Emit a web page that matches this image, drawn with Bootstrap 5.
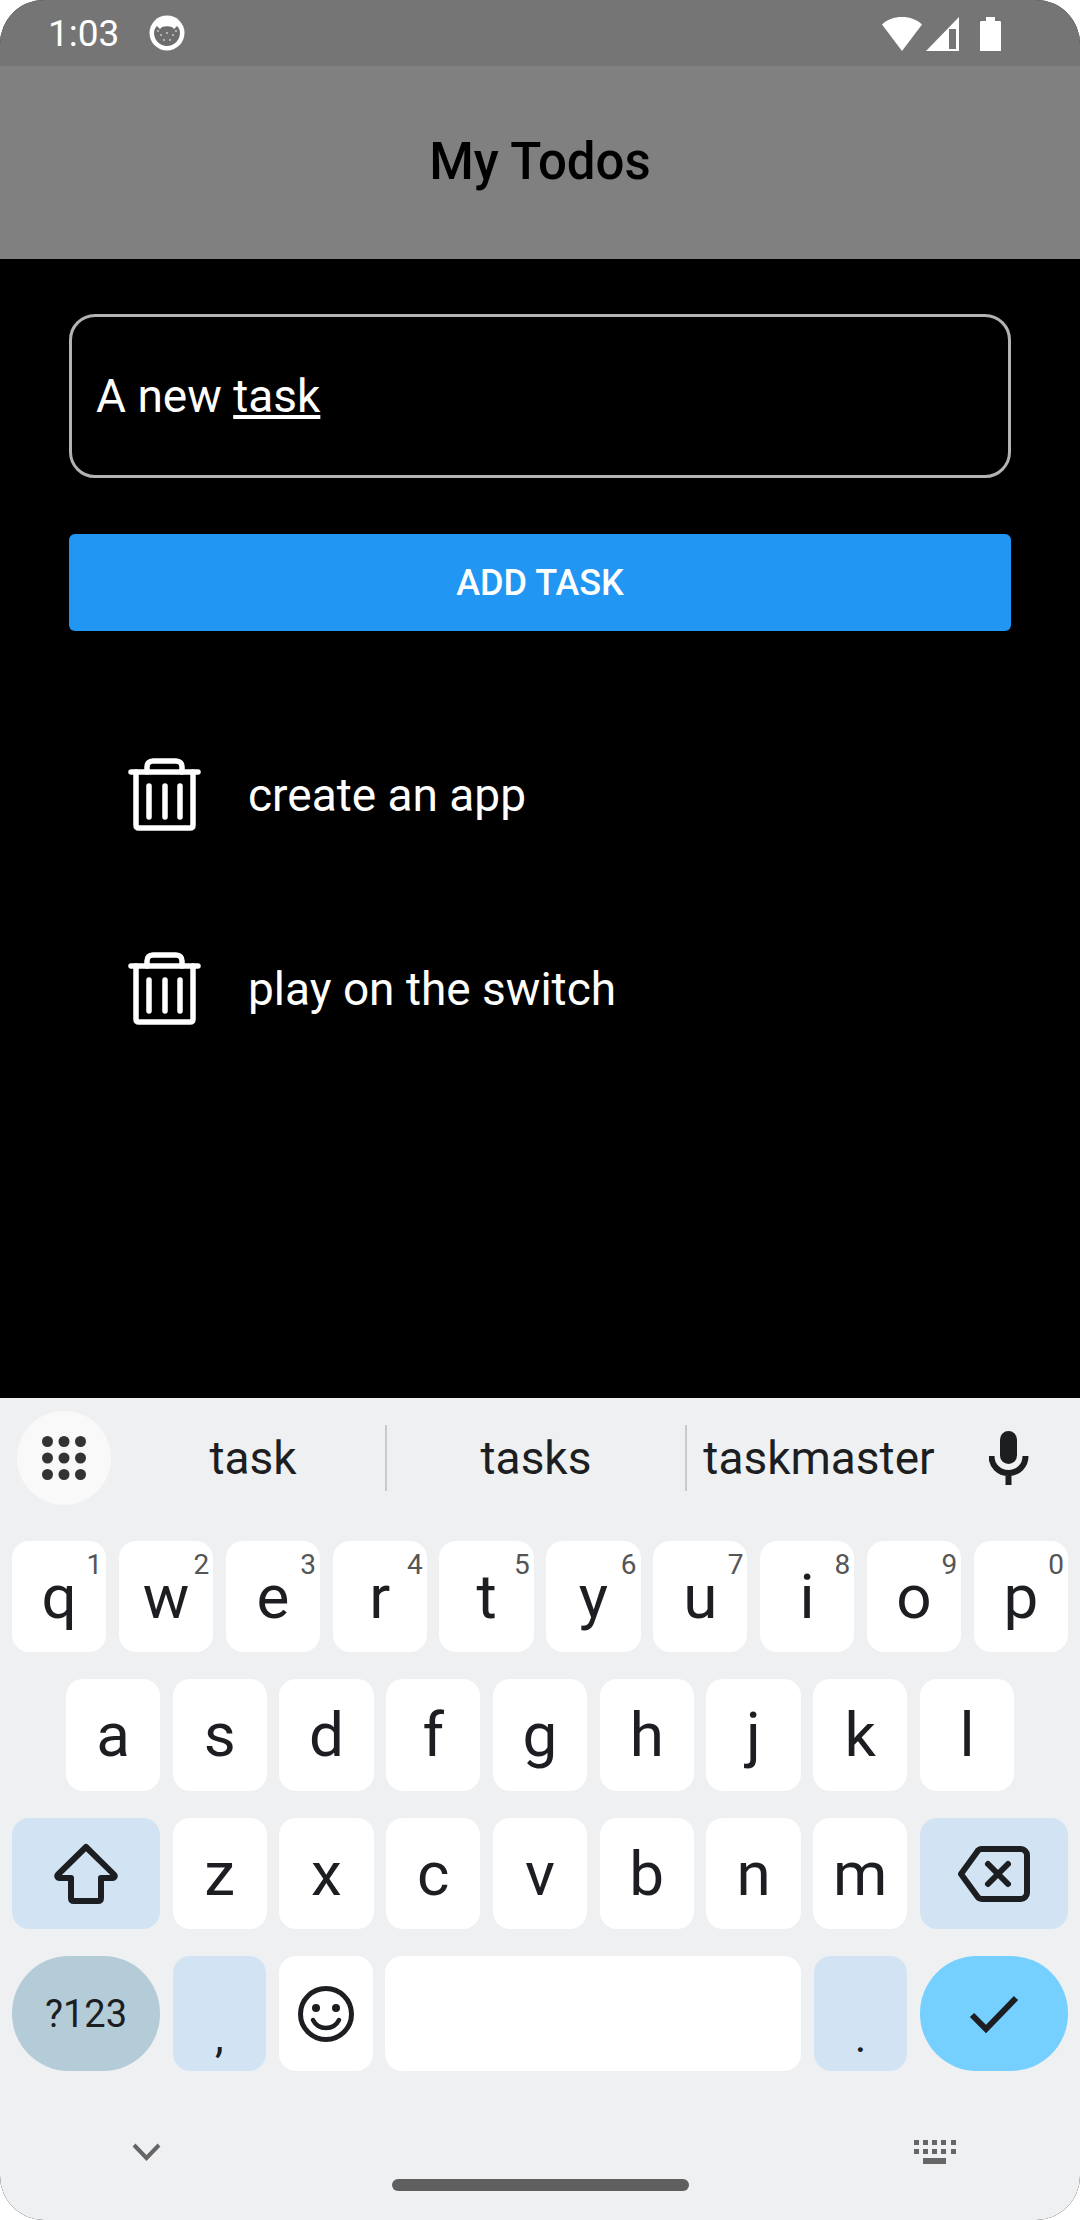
<!DOCTYPE html>
<html lang="en">
<head>
  <meta charset="UTF-8" />
  <title>My Todos</title>
  <link href="https://cdn.jsdelivr.net/npm/bootstrap@5.3.3/dist/css/bootstrap.min.css" rel="stylesheet">
  <style>
    body { margin:0; background:#fff; font-family:Roboto, "Liberation Sans", sans-serif }
    .phone { width:1080px; height:2220px; border-radius:44px; overflow:hidden; background:#000 }

    .status-bar { height:66px; background:#757575; color:#fff; padding:0 77px 0 48px }
    .status-time { font-size:37px; line-height:1; margin-right:30px }
    .app-head { height:193px; background:#808080; color:#000; font-size:51px; font-weight:500 }

    .todo-main { padding:55px 69px 0; color:#fff }
    .task-field.form-control { height:164px; background:#000; color:#fff; border:3px solid #b3b3b3; border-radius:26px; padding:0 0 0 24px; font-size:46px; line-height:1 }
    .add-btn.btn { height:97px; margin-top:56px; margin-bottom:67px; padding:0; background:#2196f3; border:0; border-radius:6px; color:#fff; font-size:36px; font-weight:500 }
    .todo-row { height:194px; padding-left:59px; gap:47px; margin-top:0; font-size:46px; padding-bottom:0 }
    .todo-row svg { margin-top:-1px }

    .kb { height:822px; background:#eff0f2; color:#1c1e21 }
    .suggest { height:143px; padding:13px 0 0 17px }
    .tools-btn { width:94px; height:94px; background:#f9f9fa; border-radius:50% }
    .sug-word { height:66px; margin-top:14px; font-size:46px; color:#1c1e21 }
    .sug-1 { width:266px; margin-left:10px; border-right:2px solid #c9cacc }
    .sug-2 { width:300px; border-right:2px solid #c9cacc }
    .sug-3 { width:264px }
    .mic-btn { width:116px; height:94px }

    .key-row { gap:12.6px; padding:0 12px }
    .key-row + .key-row { margin-top:27px }
    .row-home { padding:0 66px }
    .kh-111 { height:111px }
    .kh-112 { height:112px }
    .kh-115 { height:115px }
    .kb-key { position:relative; flex:1 1 0; background:#fff; border-radius:17px; font-size:62px; line-height:1; color:#1c1e21 }
    .kb-key sup { position:absolute; top:10px; right:4px; font-size:28px; line-height:1; color:#555; vertical-align:baseline }
    .key-wide { flex:0 0 148px }
    .key-space { flex:0 0 416px }
    .key-fn { background:#d2e4f4 }
    .key-sym { background:#b4cbd8; border-radius:57px; font-size:38px }
    .key-go { background:#75cfff; border-radius:57px }
    .key-mark { font-size:44px; padding-bottom:12px }

    .kb-nav { padding:69px 124px 0 132px }
    .home-bar { width:297px; height:12px; margin:15px auto 0; background:#5f5f5f; border-radius:6px }
  </style>
</head>
<body>
<div class="phone d-flex flex-column">

  <div class="status-bar d-flex align-items-center flex-shrink-0">
    <span class="status-time">1:03</span>
    <svg width="36" height="36" viewBox="0 0 36 36">
      <circle cx="18" cy="18" r="17.5" fill="#fff"/>
      <path d="M5 18c0-3 1-5 3-7l3 3 2-2c3-1 7-1 10 0l2 2 3-3c2 2 3 4 3 7 0 7-6 13-13 13S5 25 5 18z" fill="#6d6d6d"/>
      <g fill="#c8c8c8"><circle cx="12" cy="20" r="1"/><circle cx="18" cy="18" r="1"/><circle cx="24" cy="20" r="1"/><circle cx="15" cy="25" r="1"/><circle cx="21" cy="25" r="1"/><circle cx="9" cy="16" r="1"/><circle cx="27" cy="16" r="1"/></g>
    </svg>
    <div class="d-flex align-items-center ms-auto">
      <svg width="122" height="36" viewBox="0 0 122 36">
        <path d="M1 9.500C6 4.500 13 2 21 2s15 2.500 20 7.500L21 36z" fill="#fff"/>
        <path d="M45 36 78 2v34z" fill="#fff"/>
        <path d="M68 14h7v20h-7z" fill="#757575"/>
        <path d="M105 2h9v4h4.500c1 0 1.500.5 1.500 1.500V35.500c0 1-.5 1.500-1.500 1.500h-18c-1 0-1.500-.5-1.500-1.500V7.500c0-1 .5-1.500 1.500-1.500h4.500z" fill="#fff"/>
      </svg>
    </div>
  </div>

  <div class="app-head d-flex align-items-center justify-content-center flex-shrink-0">My Todos</div>

  <div class="todo-main flex-grow-1">
    <div class="task-field form-control d-flex align-items-center">
      <span>A new <u>task</u></span>
    </div>
    <button class="add-btn btn w-100 d-block" type="button">ADD TASK</button>

    <div class="todo-row d-flex align-items-center">
      <svg width="73" height="73" viewBox="0 0 73 73" fill="none" stroke="#fff" stroke-width="5.500" stroke-linecap="round" stroke-linejoin="round">
        <path d="M3 14h67"/>
        <path d="M19 14V9c0-3.500 2-6 6-6h23c4 0 6 2.500 6 6v5"/>
        <path d="M8 14v53c0 2 1 3 3 3h51c2 0 3-1 3-3V14"/>
        <path d="M21 28v31M37 28v31M52 28v31"/>
      </svg>
      <span>create an app</span>
    </div>
    <div class="todo-row d-flex align-items-center">
      <svg width="73" height="73" viewBox="0 0 73 73" fill="none" stroke="#fff" stroke-width="5.500" stroke-linecap="round" stroke-linejoin="round">
        <path d="M3 14h67"/>
        <path d="M19 14V9c0-3.500 2-6 6-6h23c4 0 6 2.500 6 6v5"/>
        <path d="M8 14v53c0 2 1 3 3 3h51c2 0 3-1 3-3V14"/>
        <path d="M21 28v31M37 28v31M52 28v31"/>
      </svg>
      <span>play on the switch</span>
    </div>
  </div>

  <div class="kb flex-shrink-0">
    <div class="suggest d-flex align-items-start">
      <div class="tools-btn d-flex align-items-center justify-content-center flex-shrink-0">
        <svg width="44" height="44" viewBox="0 0 44 44" fill="#333">
          <circle cx="5.500" cy="5.500" r="5.500"/><circle cx="22" cy="5.500" r="5.500"/><circle cx="38.500" cy="5.500" r="5.500"/>
          <circle cx="5.500" cy="22" r="5.500"/><circle cx="22" cy="22" r="5.500"/><circle cx="38.500" cy="22" r="5.500"/>
          <circle cx="5.500" cy="38.500" r="5.500"/><circle cx="22" cy="38.500" r="5.500"/><circle cx="38.500" cy="38.500" r="5.500"/>
        </svg>
      </div>
      <div class="sug-word sug-1 d-flex align-items-center justify-content-center">task</div>
      <div class="sug-word sug-2 d-flex align-items-center justify-content-center">tasks</div>
      <div class="sug-word sug-3 d-flex align-items-center justify-content-center">taskmaster</div>
      <div class="mic-btn d-flex align-items-center justify-content-center">
        <svg width="40" height="54" viewBox="0 0 40 54" fill="none">
          <rect x="11" y="0" width="17" height="33" rx="8.500" fill="#1c1e21"/>
          <path d="M2.500 25c0 10 7.500 17 17 17s17-7 17-17M19.500 42v12" stroke="#1c1e21" stroke-width="6"/>
        </svg>
      </div>
    </div>

    <div class="key-row d-flex kh-111">
      <div class="kb-key d-flex align-items-center justify-content-center">q<sup>1</sup></div>
      <div class="kb-key d-flex align-items-center justify-content-center">w<sup>2</sup></div>
      <div class="kb-key d-flex align-items-center justify-content-center">e<sup>3</sup></div>
      <div class="kb-key d-flex align-items-center justify-content-center">r<sup>4</sup></div>
      <div class="kb-key d-flex align-items-center justify-content-center">t<sup>5</sup></div>
      <div class="kb-key d-flex align-items-center justify-content-center">y<sup>6</sup></div>
      <div class="kb-key d-flex align-items-center justify-content-center">u<sup>7</sup></div>
      <div class="kb-key d-flex align-items-center justify-content-center">i<sup>8</sup></div>
      <div class="kb-key d-flex align-items-center justify-content-center">o<sup>9</sup></div>
      <div class="kb-key d-flex align-items-center justify-content-center">p<sup>0</sup></div>
    </div>

    <div class="key-row row-home d-flex kh-112">
      <div class="kb-key d-flex align-items-center justify-content-center">a</div>
      <div class="kb-key d-flex align-items-center justify-content-center">s</div>
      <div class="kb-key d-flex align-items-center justify-content-center">d</div>
      <div class="kb-key d-flex align-items-center justify-content-center">f</div>
      <div class="kb-key d-flex align-items-center justify-content-center">g</div>
      <div class="kb-key d-flex align-items-center justify-content-center">h</div>
      <div class="kb-key d-flex align-items-center justify-content-center">j</div>
      <div class="kb-key d-flex align-items-center justify-content-center">k</div>
      <div class="kb-key d-flex align-items-center justify-content-center">l</div>
    </div>

    <div class="key-row d-flex kh-111">
      <div class="kb-key key-wide key-fn d-flex align-items-center justify-content-center">
        <svg width="66" height="62" viewBox="0 0 66 62" fill="none">
          <path d="M33 4 5 31.500c-1.500 1.500-.5 3.500 1.500 3.500H18v20c0 2 1 3 3 3h24c2 0 3-1 3-3V35h11.500c2 0 3-2 1.500-3.500z" stroke="#1c1e21" stroke-width="6" stroke-linejoin="round"/>
        </svg>
      </div>
      <div class="kb-key d-flex align-items-center justify-content-center">z</div>
      <div class="kb-key d-flex align-items-center justify-content-center">x</div>
      <div class="kb-key d-flex align-items-center justify-content-center">c</div>
      <div class="kb-key d-flex align-items-center justify-content-center">v</div>
      <div class="kb-key d-flex align-items-center justify-content-center">b</div>
      <div class="kb-key d-flex align-items-center justify-content-center">n</div>
      <div class="kb-key d-flex align-items-center justify-content-center">m</div>
      <div class="kb-key key-wide key-fn d-flex align-items-center justify-content-center">
        <svg width="72" height="56" viewBox="0 0 72 56" fill="none" stroke="#1c1e21" stroke-width="6" stroke-linecap="round" stroke-linejoin="round">
          <path d="M3 28 19 6c1-2 3-3 5-3h39c3 0 6 3 6 6v38c0 3-3 6-6 6H24c-2 0-4-1-5-3z"/>
          <path d="M30 18l20 20M50 18 30 38"/>
        </svg>
      </div>
    </div>

    <div class="key-row d-flex kh-115">
      <div class="kb-key key-wide key-sym d-flex align-items-center justify-content-center">?123</div>
      <div class="kb-key key-fn key-mark d-flex align-items-end justify-content-center">,</div>
      <div class="kb-key d-flex align-items-center justify-content-center">
        <svg width="56" height="56" viewBox="0 0 56 56" fill="none">
          <circle cx="28" cy="28" r="25.500" stroke="#1c1e21" stroke-width="5"/>
          <circle cx="18" cy="22" r="4" fill="#1c1e21"/><circle cx="38" cy="22" r="4" fill="#1c1e21"/>
          <path d="M15 34c3 6 8 8 13 8s10-2 13-8" stroke="#1c1e21" stroke-width="4.500" stroke-linecap="round"/>
        </svg>
      </div>
      <div class="kb-key key-space"></div>
      <div class="kb-key key-fn key-mark d-flex align-items-end justify-content-center">.</div>
      <div class="kb-key key-wide key-go d-flex align-items-center justify-content-center">
        <svg width="50" height="38" viewBox="0 0 50 38" fill="none">
          <path d="M3 20l14 14L47 3" stroke="#1c1e21" stroke-width="6"/>
        </svg>
      </div>
    </div>

    <div class="kb-nav d-flex justify-content-between align-items-center">
      <svg width="29" height="18" viewBox="0 0 29 18" fill="none">
        <path d="M2 2l12.500 13L27 2" stroke="#666" stroke-width="4"/>
      </svg>
      <svg width="42" height="24" viewBox="0 0 42 24" fill="#666">
        <path d="M0 0h5v5H0zM9 0h5v5H9zM18 0h5v5h-5zM27 0h5v5h-5zM37 0h5v5h-5zM0 9h5v5H0zM9 9h5v5H9zM18 9h5v5h-5zM27 9h5v5h-5zM37 9h5v5h-5zM9 18h23v6H9z"/>
      </svg>
    </div>
    <div class="home-bar"></div>
  </div>
</div>
<script src="https://cdn.jsdelivr.net/npm/bootstrap@5.3.3/dist/js/bootstrap.bundle.min.js"></script>
</body>
</html>
